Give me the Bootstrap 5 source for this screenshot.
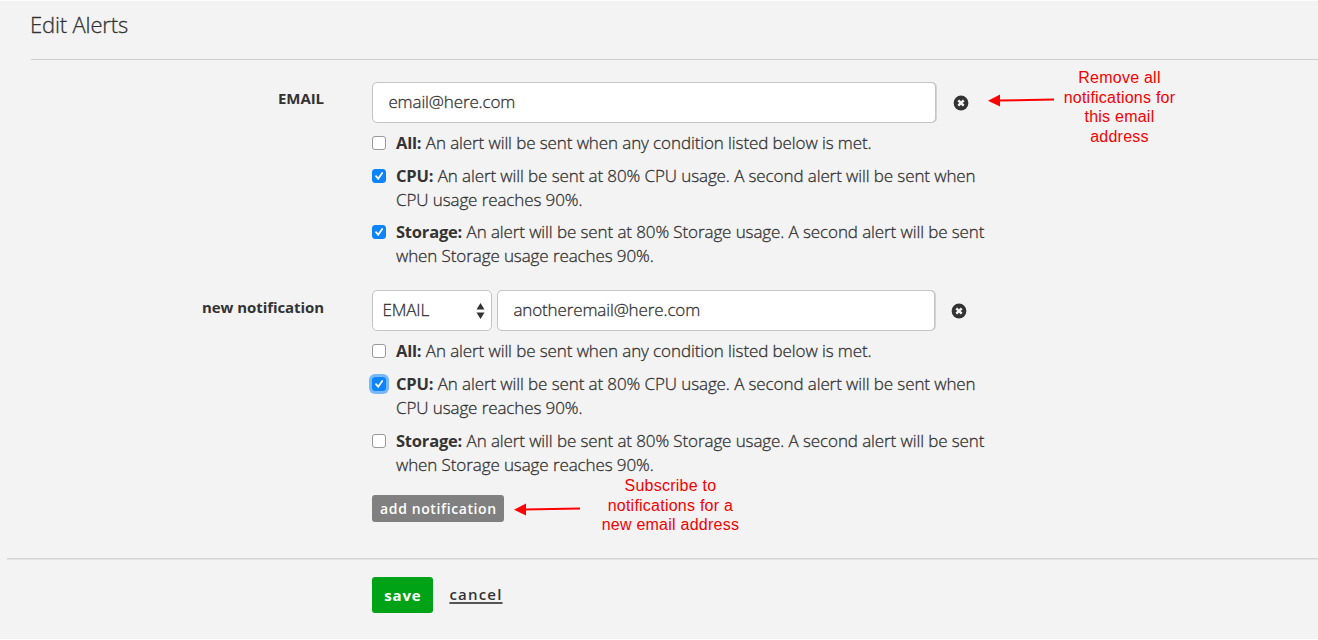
<!DOCTYPE html>
<html lang="en">
<head>
<meta charset="utf-8">
<meta name="viewport" content="width=device-width, initial-scale=1">
<title>Edit Alerts</title>
<link href="https://cdn.jsdelivr.net/npm/bootstrap@5.3.0/dist/css/bootstrap.min.css" rel="stylesheet">
<style>
body{background:#f3f3f3;color:#333;font:300 17px/24px "Open Sans",sans-serif;height:640px;overflow:hidden;border-top:1px solid #fcfcfc;border-bottom:1px solid #fff}
.page-title{font-size:22px;font-weight:300;line-height:30px;letter-spacing:-.15px;margin:0 0 0 30px;padding-top:8px;height:58px}
.page-title,.form-control,.form-select,.option span{-webkit-text-stroke:.3px #333}
.rule{height:1px;background:#cfcfcf;margin-left:31px}
.rule-foot{height:2px;background:linear-gradient(#d6d6d6 50%,#e2e2e2 50%);margin-left:7px}
.alert-row{display:flex;align-items:flex-start;height:208px;padding-top:22px}
.alert-row-new{height:290px}
.field-label{width:324px;margin-right:48.4px;text-align:right;font-size:15px;font-weight:700;letter-spacing:-.07px;padding-top:4px;flex:none;line-height:24px}
.fields{width:615.6px;flex:none}
.form-control,.form-select{height:41px;border:1px solid #c4c4c4;border-radius:5px;color:#333;font-size:17px;font-weight:300;letter-spacing:-.12px;padding:0 14px 2px 15px;background-color:#fff}
.form-control{box-shadow:1px 0 0 #d5d5d5}
.field-first{width:564px}.field-new{width:438px}
.form-select{width:120px;padding:0 9px 2px;background-image:none;letter-spacing:-.1px}
.select-arrows{position:absolute;right:7px;top:13px}
.btn-remove{border:0;background:none;padding:0;line-height:0}
.option{display:flex;align-items:flex-start;white-space:nowrap}
.option b{font-size:16.5px;font-weight:700;letter-spacing:-.2px}
.option span{letter-spacing:-.1px}
.option .form-check-input{width:14px;height:14px;margin:5px 9.6px 0 0;border:1px solid #999;border-radius:3px;flex:none;background-color:#fff}
.option .form-check-input:checked{background-color:#0a84ff;border-color:#0a84ff;background-size:14px;background-image:url("data:image/svg+xml,%3Csvg xmlns='http://www.w3.org/2000/svg' viewBox='0 0 14 14'%3E%3Cpath d='M4 7.2l2.2 2.6L10.2 4' fill='none' stroke='white' stroke-width='1.8' stroke-linecap='round'/%3E%3C/svg%3E")}
.option .form-check-input:focus,.option .ringed{box-shadow:0 0 0 3px #78b8f8}
.btn-add{background:#808080;color:#fff;font-size:14px;font-weight:600;letter-spacing:.6px;line-height:26px;height:27px;width:132px;padding:0;border:0;border-radius:3px}
.btn-save{background:#00a316;color:#fff;font-size:15px;font-weight:700;letter-spacing:.8px;line-height:34px;height:36px;width:61px;padding:0;border:0;border-radius:3px}
.link-cancel{color:#333;font-size:15px;font-weight:600;letter-spacing:1.2px;text-decoration:underline;text-underline-offset:2px;text-decoration-thickness:2px;text-decoration-color:#555;margin-top:-2px}
.note{color:#f60000;font:400 16px/19.5px "Liberation Sans",Arial,sans-serif;letter-spacing:.24px;text-align:center;white-space:nowrap}
</style>
</head>
<body>
<h1 class="page-title">Edit Alerts</h1>
<div class="rule"></div>
<form>
  <div class="alert-row">
    <label class="field-label" for="email1">EMAIL</label>
    <div class="fields">
      <div class="d-flex align-items-center">
        <input id="email1" class="form-control field-first" value="email@here.com">
        <button type="button" class="btn-remove" style="margin-left:17px" aria-label="Remove"><svg width="16" height="16" viewBox="0 0 16 16"><circle cx="8" cy="8" r="7.4" fill="#333"/><path d="M5.3 5.3l5.4 5.4m0-5.4l-5.4 5.4" stroke="#f3f3f3" stroke-width="2.5"/></svg></button>
      </div>
      <div class="option" style="margin-top:8px"><input type="checkbox" class="form-check-input"><div><b>All:</b> <span>An alert will be sent when any condition listed below is met.</span></div></div>
      <div class="option" style="margin-top:9px"><input type="checkbox" class="form-check-input" checked><div><b>CPU:</b> <span>An alert will be sent at 80% CPU usage. A second alert will be sent when<br>CPU usage reaches 90%.</span></div></div>
      <div class="option" style="margin-top:8px"><input type="checkbox" class="form-check-input" checked><div><b>Storage:</b> <span>An alert will be sent at 80% Storage usage. A second alert will be sent<br>when Storage usage reaches 90%.</span></div></div>
    </div>
    <svg width="67" height="14" viewBox="0 0 67 14" style="margin-top:11px"><path d="M10 7.5L66 6.5" stroke="#f00" stroke-width="2"/><path d="M0 7.7L12 1.5V13.5Z" fill="#f00"/></svg>
    <div class="note" style="width:129px;margin-top:-14px">Remove all<br>notifications for<br>this email<br>address</div>
  </div>
  <div class="alert-row alert-row-new">
    <label class="field-label" for="email2" style="padding-top:5px">new notification</label>
    <div class="fields">
      <div class="d-flex align-items-center">
        <div class="position-relative">
          <select class="form-select"><option>EMAIL</option></select>
          <svg class="select-arrows" width="9" height="16" viewBox="0 0 9 16"><path d="M.5 6.5L4.5 0l4 6.5zM.5 9.5h8l-4 6.5z" fill="#333"/></svg>
        </div>
        <input id="email2" class="form-control field-new" style="margin-left:5px" value="anotheremail@here.com">
        <button type="button" class="btn-remove" style="margin-left:16px" aria-label="Remove"><svg width="16" height="16" viewBox="0 0 16 16"><circle cx="8" cy="8" r="7.4" fill="#333"/><path d="M5.3 5.3l5.4 5.4m0-5.4l-5.4 5.4" stroke="#f3f3f3" stroke-width="2.5"/></svg></button>
      </div>
      <div class="option" style="margin-top:8px"><input type="checkbox" class="form-check-input"><div><b>All:</b> <span>An alert will be sent when any condition listed below is met.</span></div></div>
      <div class="option" style="margin-top:9px"><input type="checkbox" class="form-check-input ringed" checked><div><b>CPU:</b> <span>An alert will be sent at 80% CPU usage. A second alert will be sent when<br>CPU usage reaches 90%.</span></div></div>
      <div class="option" style="margin-top:9px"><input type="checkbox" class="form-check-input"><div><b>Storage:</b> <span>An alert will be sent at 80% Storage usage. A second alert will be sent<br>when Storage usage reaches 90%.</span></div></div>
      <div class="d-flex align-items-start" style="padding-top:18px">
        <button type="button" class="btn btn-add">add notification</button>
        <svg width="67" height="14" viewBox="0 0 67 14" style="margin:7px 0 0 10px"><path d="M10 7.5L66 6.5" stroke="#f00" stroke-width="2"/><path d="M0 7.7L12 1.5V13.5Z" fill="#f00"/></svg>
        <div class="note" style="width:178px;margin-top:-19px">Subscribe to<br>notifications for a<br>new email address</div>
      </div>
    </div>
  </div>
  <div class="rule-foot"></div>
  <div class="d-flex align-items-center" style="padding:17px 0 0 372.4px">
    <button type="button" class="btn btn-save">save</button>
    <a href="#" class="link-cancel" style="margin-left:16px">cancel</a>
  </div>
</form>
<script src="https://cdn.jsdelivr.net/npm/bootstrap@5.3.0/dist/js/bootstrap.bundle.min.js"></script>
</body>
</html>
